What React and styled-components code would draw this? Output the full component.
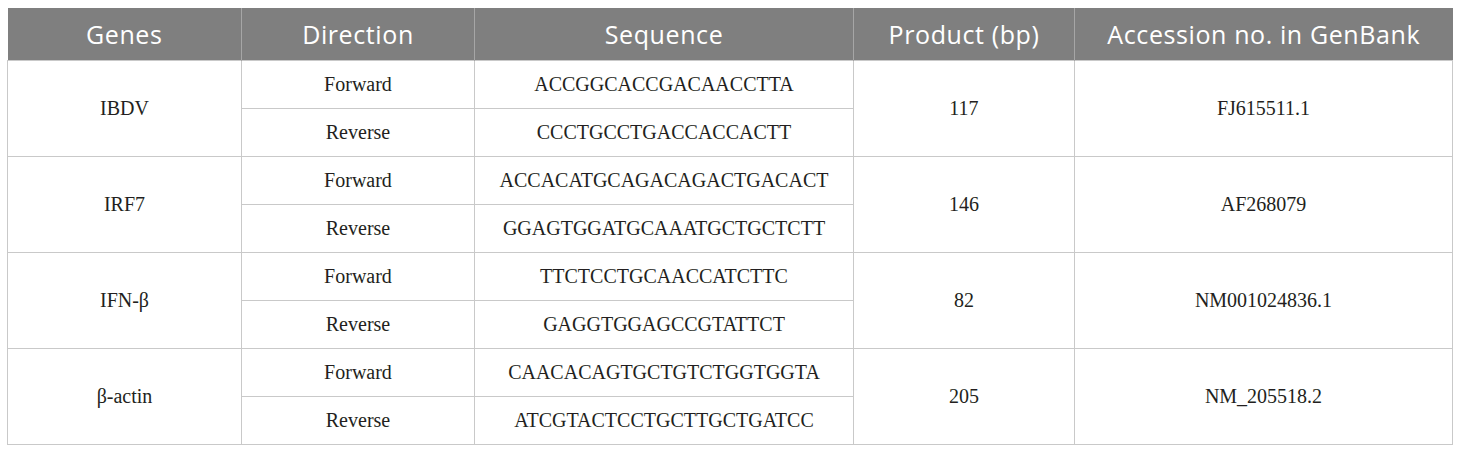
import { styled, createGlobalStyle } from "styled-components";

const GlobalStyle = createGlobalStyle`
  html, body {
    margin: 0;
    background: #fff;
  }
`;

const Page = styled.div`
  padding: 8px 8px 0 7px;
`;

const Table = styled.table`
  width: 1445px;
  border-collapse: collapse;
  table-layout: fixed;
`;

const HeadCell = styled.th`
  height: 52px;
  padding: 0;
  background-color: #7f7f7f;
  border-left: 1px solid #a6a6a6;
  color: #fff;
  font-family: "Open Sans", "Liberation Sans", sans-serif;
  font-weight: 400;
  font-size: 25px;
  letter-spacing: 0.6px;
  text-align: center;
  vertical-align: middle;

  &:first-child {
    border-left: none;
  }
`;

const Cell = styled.td`
  height: 47px;
  padding: 0;
  border: 1px solid #c9c9c9;
  color: #231f20;
  font-family: "Liberation Serif", "DejaVu Serif", serif;
  font-size: 20px;
  text-align: center;
  vertical-align: middle;
`;

const widths = [234, 233, 379, 221, 378];
const headers = ["Genes", "Direction", "Sequence", "Product (bp)", "Accession no. in GenBank"];

const genes = [
  { name: "IBDV", fwd: "ACCGGCACCGACAACCTTA", rev: "CCCTGCCTGACCACCACTT", bp: "117", acc: "FJ615511.1" },
  { name: "IRF7", fwd: "ACCACATGCAGACAGACTGACACT", rev: "GGAGTGGATGCAAATGCTGCTCTT", bp: "146", acc: "AF268079" },
  { name: "IFN-β", fwd: "TTCTCCTGCAACCATCTTC", rev: "GAGGTGGAGCCGTATTCT", bp: "82", acc: "NM001024836.1" },
  { name: "β-actin", fwd: "CAACACAGTGCTGTCTGGTGGTA", rev: "ATCGTACTCCTGCTTGCTGATCC", bp: "205", acc: "NM_205518.2" },
];

function App() {
  return (
    <Page>
      <GlobalStyle />
      <Table>
        <colgroup>
          {widths.map((w, i) => (
            <col key={i} style={{ width: w }} />
          ))}
        </colgroup>
        <thead>
          <tr>
            {headers.map((h) => (
              <HeadCell key={h}>{h}</HeadCell>
            ))}
          </tr>
        </thead>
        <tbody>
          {genes.map((g) => [
            <tr key={g.name + "-f"}>
              <Cell rowSpan={2}>{g.name}</Cell>
              <Cell>Forward</Cell>
              <Cell>{g.fwd}</Cell>
              <Cell rowSpan={2}>{g.bp}</Cell>
              <Cell rowSpan={2}>{g.acc}</Cell>
            </tr>,
            <tr key={g.name + "-r"}>
              <Cell>Reverse</Cell>
              <Cell>{g.rev}</Cell>
            </tr>,
          ])}
        </tbody>
      </Table>
    </Page>
  );
}

export default App;
